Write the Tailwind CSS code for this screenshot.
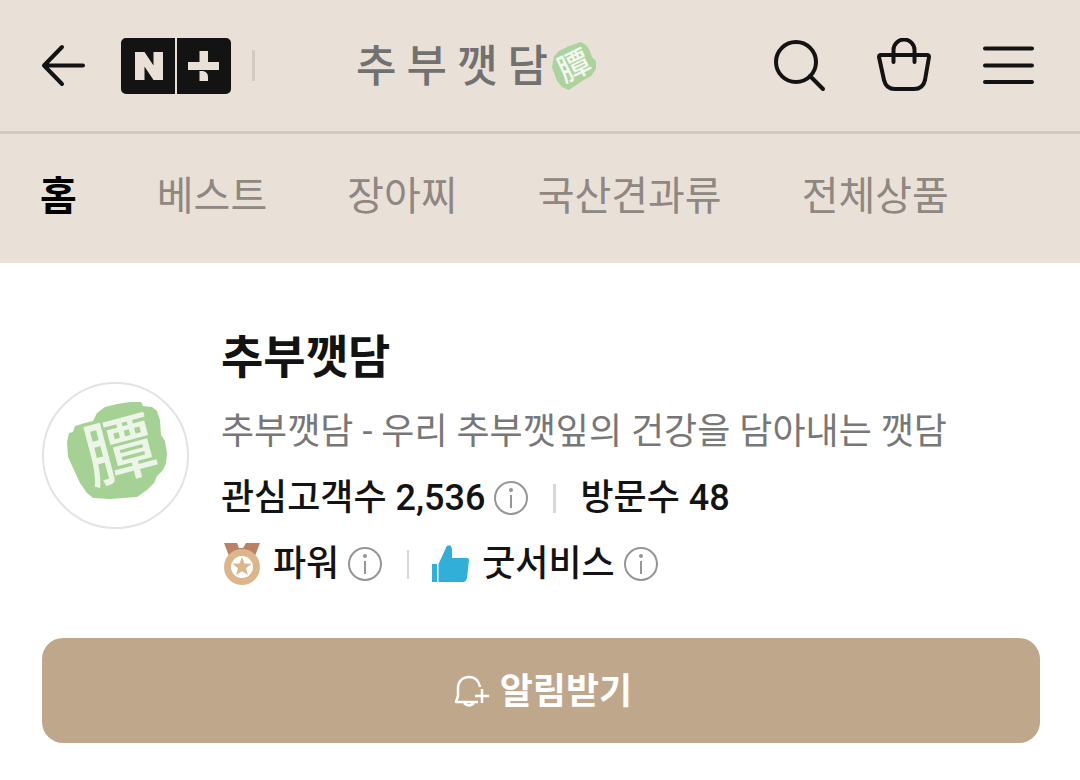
<!DOCTYPE html>
<html lang="ko">
<head>
<meta charset="utf-8">
<meta name="viewport" content="width=device-width, initial-scale=1">
<title>추부깻담</title>
<script src="https://cdn.jsdelivr.net/npm/@tailwindcss/browser@4"></script>
</head>
<body class="bg-white text-[#131313] font-[Roboto,'Noto_Sans_CJK_KR',sans-serif]">
<header class="bg-[#e9e1d8]">
  <div class="flex h-[134px] items-center border-b-3 border-[#d2c9c1] pr-[45px] pl-[41px]">
    <button type="button" aria-label="뒤로" class="shrink-0">
      <svg width="45" height="44" viewBox="0 0 45 44" fill="none" stroke="#131313" stroke-width="4" stroke-linecap="round" stroke-linejoin="round"><path d="M21 3 3 21.500l18 18.500M4 21.500h38"/></svg>
    </button>
    <a href="#" aria-label="네이버플러스 스토어" class="ml-[35px] shrink-0">
      <svg width="110" height="56" viewBox="0 0 110 56"><path fill="#131313" d="M5 0h49v56H5a5 5 0 0 1-5-5V5a5 5 0 0 1 5-5zM56 0h49a5 5 0 0 1 5 5v46a5 5 0 0 1-5 5H56z"/><path fill="#e9e1d8" d="M14 14h9.500l9 13.500V14H42v28h-9.500l-9-13.500V42H14zM78.500 13h8.500v11h11v8H67v-8h11.500zM78.500 33H82q5 1 5 6v4h-8.500z"/></svg>
    </a>
    <span class="ml-[21px] h-[31px] w-[3px] shrink-0 bg-[#d2cac3]"></span>
    <div class="flex flex-1 justify-center">
      <a href="#" aria-label="추부깻담" class="mr-[74px] flex items-center gap-1 text-[44px] leading-[56px] font-medium text-[#717170]">
        <span class="flex gap-[10px] pt-0.5"><span>추</span><span>부</span><span>깻</span><span>담</span></span>
        <svg width="46" height="66" viewBox="0 -8 46 66" class="overflow-visible"><path fill="#acd39d" d="M0 26 2 15 7 10 17 5 29 1l5 3 3 4 3 8 4 4v8l-5 7-9 5-13 9-7-3-5-6z"/><text x="22" y="36" text-anchor="middle" transform="rotate(-26 22 25)" font-family="Noto Sans CJK KR" font-size="32" font-weight="500" fill="#f2f7ef">&#x443A;</text></svg>
      </a>
    </div>
    <div class="flex shrink-0 items-center gap-[50px]">
      <button type="button" aria-label="검색"><svg width="54" height="54" viewBox="0 0 54 54" fill="none" stroke="#131313" stroke-width="4" stroke-linecap="round"><circle cx="23" cy="23" r="20"/><path d="m37 37 13 13"/></svg></button>
      <button type="button" aria-label="장바구니"><svg width="54" height="56" viewBox="0 0 54 56" fill="none" stroke="#131313" stroke-width="4" stroke-linecap="round" stroke-linejoin="round"><path d="M4 17h46q2 0 2 2l-4 23q-2 9-11 9H18q-9 0-11-9L2 19q0-2 2-2zM16.500 24V12a10.500 10.500 0 0 1 21 0v12"/></svg></button>
      <button type="button" aria-label="메뉴"><svg width="54" height="40" viewBox="0 0 54 40" fill="none" stroke="#131313" stroke-width="4" stroke-linecap="round"><path d="M4 2.500h47M4 19.500h47M4 36h47"/></svg></button>
    </div>
  </div>
  <nav class="flex h-[129px] gap-20 pt-[33px] pl-10 text-[40px] leading-[60px] whitespace-nowrap text-[#8e8782]">
    <a href="#" aria-current="page" class="font-bold text-black">홈</a>
    <a href="#">베스트</a>
    <a href="#">장아찌</a>
    <a href="#">국산견과류</a>
    <a href="#">전체상품</a>
  </nav>
</header>
<main class="pt-[50px] pr-10 pb-9 pl-[42px]">
  <section class="flex items-center gap-8">
    <div class="size-[147px] shrink-0 overflow-hidden rounded-full border-2 border-[#e3e3e3]">
      <svg viewBox="0 0 143 143" role="img" aria-label="추부깻담 로고"><path fill="#a5d294" d="M23 58 25 49 29 48 31 42 41 39 49 37 53 29 61 23 73 20 86 18 97 18 99 22 108 23 113 27 116 36 117 51 121 57 123 69 122 79 119 86 113 92 110 99 103 106 93 113 79 114 66 115 49 114 43 109 36 99 30 86 24 73z"/><text x="76" y="92" text-anchor="middle" transform="rotate(-15 76 67)" font-family="Noto Sans CJK KR" font-size="71" font-weight="500" fill="#edf5e9">&#x443A;</text></svg>
    </div>
    <div class="min-w-0 flex-1 pt-0.5 text-[36px] leading-[66px] font-medium">
      <h1 class="text-[46px] leading-[84px] font-bold">추부깻담</h1>
      <p class="font-normal text-[#777777]">추부깻담 - 우리 추부깻잎의 건강을 담아내는 깻담</p>
      <div class="flex items-center">
        <span>관심고객수 2,536</span>
        <button type="button" aria-label="관심고객수 안내" class="ml-2"><svg width="36" height="36" viewBox="0 0 36 36"><circle cx="18" cy="18" r="16" fill="none" stroke="#959595" stroke-width="2"/><circle cx="18" cy="10" r="2" fill="#959595"/><path fill="#959595" d="M17 15h2v13h-2z"/></svg></button>
        <span class="mx-6 h-[29px] w-[3px] bg-[#d3d8dc]"></span>
        <span>방문수 48</span>
      </div>
      <div class="flex items-center">
        <svg width="42" height="44" viewBox="0 0 42 44"><path fill="#b98266" d="M3 1h13l2 5h4l3-5h14l-5 13H8z"/><circle cx="21" cy="25" r="18" fill="#dcb58b"/><circle cx="21" cy="25" r="11" fill="#fff"/><path fill="#dcb58b" d="m21 15 2.500 6.500 7 .3-5.500 4.400 1.900 6.800L21 29.200 15.100 33l1.900-6.800-5.500-4.400 7-.3z"/></svg>
        <span class="ml-2.5">파워</span>
        <button type="button" aria-label="파워 안내" class="ml-2"><svg width="36" height="36" viewBox="0 0 36 36"><circle cx="18" cy="18" r="16" fill="none" stroke="#959595" stroke-width="2"/><circle cx="18" cy="10" r="2" fill="#959595"/><path fill="#959595" d="M17 15h2v13h-2z"/></svg></button>
        <span class="mr-[23px] ml-6 h-[29px] w-[2px] bg-[#d3d8dc]"></span>
        <svg width="38" height="38" viewBox="0 0 38 38" fill="#32afd8"><path d="M0 19h5v18H0zM6.500 19 13 5l1-3q2-3 5-1l1 3v9h15q2 0 2 2l-2 18q-1 4-4 4H6.500z"/></svg>
        <span class="ml-3">굿서비스</span>
        <button type="button" aria-label="굿서비스 안내" class="ml-2"><svg width="36" height="36" viewBox="0 0 36 36"><circle cx="18" cy="18" r="16" fill="none" stroke="#959595" stroke-width="2"/><circle cx="18" cy="10" r="2" fill="#959595"/><path fill="#959595" d="M17 15h2v13h-2z"/></svg></button>
      </div>
    </div>
  </section>
  <button type="button" class="mt-[41px] flex h-[105px] w-full items-center justify-center gap-2.5 rounded-[21px] bg-[#bfa78c] pt-0.5 pl-1 text-[36px] font-bold text-white">
    <svg width="36" height="34" viewBox="0 0 36 34" fill="none" stroke="#fff" stroke-width="2.500" stroke-linejoin="round"><path d="M26 12C25 6 21 2 15 2 8 2 4 7 4 13v8l-2 6h22M10 28q5 5 10 0M28 14v14M21 21h14"/></svg>
    <span>알림받기</span>
  </button>
</main>
</body>
</html>
